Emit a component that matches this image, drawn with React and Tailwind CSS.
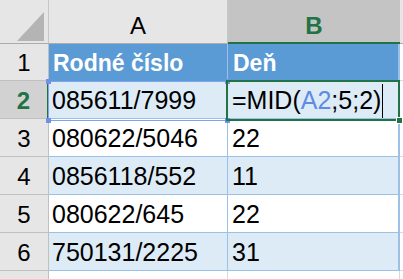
import React from 'react';

const rows = [
  { n: 3, a: '080622/5046', b: '22' },
  { n: 4, a: '0856118/552', b: '11' },
  { n: 5, a: '080622/645', b: '22' },
  { n: 6, a: '750131/2225', b: '31' },
];

const Corner = ({ className }) => (
  <div className={'absolute w-[5px] h-[5px] bg-[#6b92e6] ' + className} />
);

export default function App() {
  return (
    <div className="relative w-[403px] h-[279px] overflow-hidden bg-white font-['Liberation_Sans',Arial,sans-serif] text-black flex flex-col">
      {/* column headers */}
      <div className="flex h-[44px] shrink-0 border-b border-[#ababab] bg-[#e6e6e6]">
        <div className="w-[49px] border-r border-[#c6c6c6] flex items-end justify-end pr-[4px] pb-[2px]">
          <svg width="27" height="29" viewBox="0 0 27 29">
            <polygon points="0,29 27,29 27,0" fill="#b4b4b4" />
          </svg>
        </div>
        <div className="w-[179px] border-r border-[#c6c6c6] flex items-center justify-center pt-[9px] text-[24px]">A</div>
        <div className="w-[172px] bg-[#c4c4c4] border-b-2 border-[#217346] -mb-px flex items-center justify-center pt-[9px] text-[24px] font-bold text-[#217346]">B</div>
        <div className="flex-1" />
      </div>

      {/* row 1 */}
      <div className="flex h-[37px] shrink-0">
        <div className="w-[49px] bg-[#e6e6e6] border-r border-b border-[#c0c0c0] flex items-center justify-center pt-[2px] text-[24px]">1</div>
        <div className="w-[179px] bg-[#5b9bd5] border-r border-[#9bc2e6] flex items-center pl-[4px] pt-[2px] text-[23px] font-bold text-white">Rodné číslo</div>
        <div className="w-[172px] bg-[#5b9bd5] border-r-2 border-[#9bc2e6] flex items-center pl-[5px] pt-[2px] text-[23px] font-bold text-white">Deň</div>
        <div className="flex-1 border-b border-[#d9d9d9]" />
      </div>

      {/* row 2 (selected) */}
      <div className="flex h-[38px] shrink-0">
        <div className="w-[49px] bg-[#d2d2d2] border-r-2 border-r-[#217346] border-b border-b-[#c0c0c0] flex items-center justify-center pt-[2px] text-[24px] font-bold text-[#217346]">2</div>
        <div className="w-[179px] bg-[#ddebf7] border-r border-b border-[#9bc2e6] flex items-center pl-[3px] pt-[2px] text-[25px]">085611/7999</div>
        <div className="w-[172px] bg-[#ddebf7] border-r-2 border-b border-[#9bc2e6] flex items-center pl-[4px] pt-[2px] text-[25px]">
          <span>=MID(<span className="text-[#5f8be4]">A2</span>;5;2)</span>
          <span className="inline-block w-px h-[34px] bg-black ml-[1px]" />
        </div>
        <div className="flex-1 border-b border-[#d9d9d9]" />
      </div>

      {rows.map((r) => (
        <div key={r.n} className="flex h-[38px] shrink-0">
          <div className="w-[49px] bg-[#e6e6e6] border-r border-b border-[#c0c0c0] flex items-center justify-center pt-[2px] text-[24px]">{r.n}</div>
          <div className={(r.n % 2 === 0 ? 'bg-[#ddebf7] ' : 'bg-white ') + 'w-[179px] border-r border-b border-[#9bc2e6] flex items-center pl-[3px] pt-[2px] text-[25px]'}>{r.a}</div>
          <div className={(r.n % 2 === 0 ? 'bg-[#ddebf7] ' : 'bg-white ') + 'w-[172px] border-r-2 border-b border-[#9bc2e6] flex items-center pl-[4px] pt-[2px] text-[25px]'}>{r.b}</div>
          <div className="flex-1 border-b border-[#d9d9d9]" />
        </div>
      ))}

      {/* row 7, cut off */}
      <div className="flex flex-1">
        <div className="w-[49px] bg-[#e6e6e6] border-r border-[#c0c0c0]" />
        <div className="w-[179px] border-r border-[#d9d9d9]" />
        <div className="w-[172px] border-r border-[#d9d9d9]" />
        <div className="flex-1" />
      </div>

      {/* A2 reference outline */}
      <div className="absolute left-[48px] top-[81px] w-[180px] h-[40px] border border-[#7ea4ee] pointer-events-none" />
      <Corner className="left-[46px] top-[79px]" />
      <Corner className="left-[225px] top-[79px]" />
      <Corner className="left-[46px] top-[118px]" />
      <Corner className="left-[225px] top-[118px]" />

      {/* B2 active cell */}
      <div className="absolute left-[226px] top-[80px] w-[174px] h-[41px] border-2 border-[#217346] pointer-events-none" />
      <div className="absolute left-[396px] top-[117px] w-[7px] h-[7px] bg-[#217346] border border-white" />
    </div>
  );
}
